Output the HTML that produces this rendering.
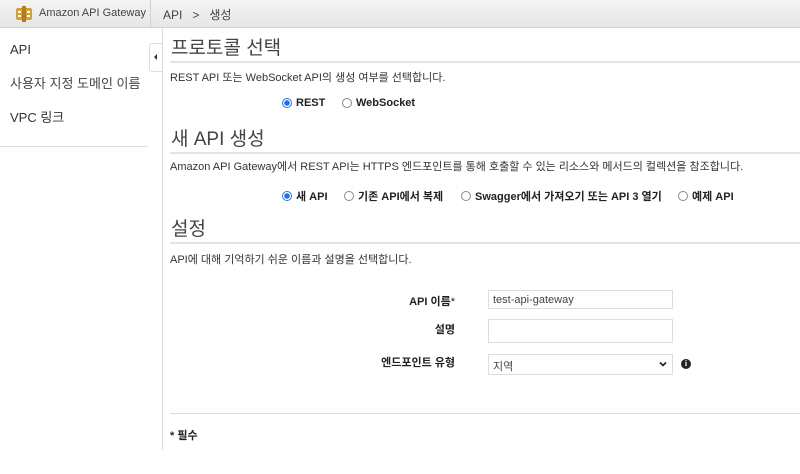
<!DOCTYPE html>
<html><head><meta charset="utf-8"><style>
*{margin:0;padding:0;box-sizing:border-box}
body{width:800px;height:474px;background:#fff;font-family:"Liberation Sans","Noto Sans CJK KR",sans-serif;color:#333;position:relative;overflow:hidden}
.a{position:absolute;white-space:nowrap}
.hdr{left:0;top:0;width:800px;height:28px;background:linear-gradient(#f4f4f4,#e6e6e6);border-bottom:1px solid #d5d5d5}
.h2{font-size:19px;color:#444}
.line{height:2px;background:#e4e4e4}
.s{font-size:11px;color:#333}
.r{font-size:11px;font-weight:bold;color:#222;display:flex;align-items:center}
.rb{width:10px;height:10px;border:1px solid #888;border-radius:50%;margin-right:4px;display:inline-block;background:#fff}
.rb.on{border:1px solid #2a78d6;background:radial-gradient(circle,#1a73e8 2.5px,#fff 3px)}
.lbl{font-size:11px;font-weight:bold;color:#222;text-align:right;width:200px}
.inp{border:1px solid #ddd;background:#fff;width:185px;height:19px;font-size:11px;padding:3px 4px;color:#444}
</style></head><body>
<div class="a hdr"></div>
<div class="a" style="left:15px;top:5px;width:18px;height:18px">
<svg width="18" height="18" viewBox="0 0 18 18"><rect x="1" y="3" width="16" height="12" rx="2" fill="#d4a03c"/><rect x="7" y="1" width="4" height="16" fill="#b87a1e"/><rect x="3" y="6" width="3" height="2" fill="#fff"/><rect x="12" y="6" width="3" height="2" fill="#fff"/><rect x="3" y="10" width="3" height="2" fill="#fff"/><rect x="12" y="10" width="3" height="2" fill="#fff"/></svg></div>
<div class="a" style="left:39px;top:7px;font-size:11px;color:#444">Amazon API Gateway</div>
<div class="a" style="left:150px;top:0;width:1px;height:28px;background:#d0d0d0"></div>
<div class="a" style="left:163px;top:6px;font-size:12px;color:#444">API &nbsp; &gt; &nbsp; 생성</div>
<div class="a" style="left:10px;top:42px;font-size:13px;color:#333">API</div>
<div class="a" style="left:10px;top:73px;font-size:13px;color:#444">사용자 지정 도메인 이름</div>
<div class="a" style="left:10px;top:107px;font-size:13px;color:#333">VPC 링크</div>
<div class="a" style="left:0;top:146px;width:148px;height:1px;background:#ddd"></div>
<div class="a" style="left:149px;top:43px;width:14px;height:29px;border:1px solid #ddd;border-right:none;border-radius:3px 0 0 3px;background:#fff"></div>
<div class="a" style="left:154px;top:54px;width:0;height:0;border-top:3px solid transparent;border-bottom:3px solid transparent;border-right:3px solid #333"></div>
<div class="a" style="left:162px;top:28px;width:1px;height:422px;background:#ddd"></div>
<div class="a h2" style="left:171px;top:33px">프로토콜 선택</div>
<div class="a line" style="left:170px;top:61px;width:630px"></div>
<div class="a s" style="left:170px;top:69px">REST API 또는 WebSocket API의 생성 여부를 선택합니다.</div>
<div class="a r" style="left:282px;top:97px"><span class="rb on"></span>REST</div>
<div class="a r" style="left:342px;top:97px"><span class="rb"></span>WebSocket</div>
<div class="a h2" style="left:171px;top:124px">새 API 생성</div>
<div class="a line" style="left:170px;top:152px;width:630px"></div>
<div class="a s" style="left:170px;top:158px">Amazon API Gateway에서 REST API는 HTTPS 엔드포인트를 통해 호출할 수 있는 리소스와 메서드의 컬렉션을 참조합니다.</div>
<div class="a r" style="left:282px;top:188px"><span class="rb on"></span>새 API</div>
<div class="a r" style="left:344px;top:188px"><span class="rb"></span>기존 API에서 복제</div>
<div class="a r" style="left:461px;top:188px"><span class="rb"></span>Swagger에서 가져오기 또는 API 3 열기</div>
<div class="a r" style="left:678px;top:188px"><span class="rb"></span>예제 API</div>
<div class="a h2" style="left:171px;top:214px">설정</div>
<div class="a line" style="left:170px;top:242px;width:630px"></div>
<div class="a s" style="left:170px;top:251px">API에 대해 기억하기 쉬운 이름과 설명을 선택합니다.</div>
<div class="a lbl" style="left:255px;top:293px">API 이름<span style="font-weight:normal">*</span></div>
<div class="a inp" style="left:488px;top:290px">test-api-gateway</div>
<div class="a lbl" style="left:255px;top:321px">설명</div>
<div class="a inp" style="left:488px;top:319px;height:24px"></div>
<div class="a lbl" style="left:255px;top:354px">엔드포인트 유형</div>
<div class="a inp" style="left:488px;top:354px;height:21px">지역<svg style="position:absolute;right:5px;top:6px" width="8" height="6" viewBox="0 0 8 6"><path d="M1 1.5L4 4.5L7 1.5" stroke="#222" stroke-width="1.6" fill="none"/></svg></div>
<div class="a" style="left:681px;top:359px;width:10px;height:10px;border-radius:50%;background:#222;color:#fff;font-size:8px;font-weight:bold;text-align:center;line-height:10px;font-family:'Liberation Serif',serif">i</div>
<div class="a" style="left:170px;top:413px;width:630px;height:1px;background:#ddd"></div>
<div class="a" style="left:170px;top:427px;font-size:11px;font-weight:bold;color:#222">* 필수</div>
</body></html>
